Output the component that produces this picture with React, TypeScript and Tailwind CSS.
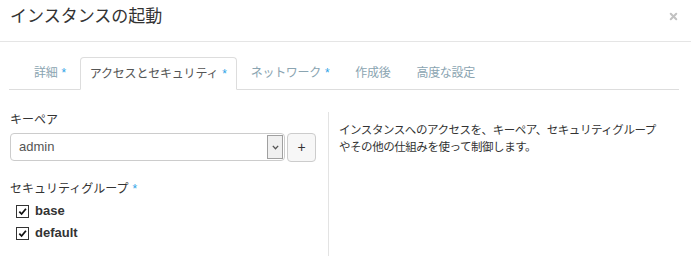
import { X } from 'lucide-react'

const jp = { fontFamily: '"Liberation Sans", "Noto Sans CJK JP", sans-serif' }

const tabs = [
  { label: '詳細', req: true },
  { label: 'アクセスとセキュリティ', req: true, active: true },
  { label: 'ネットワーク', req: true },
  { label: '作成後' },
  { label: '高度な設定' },
]

function Check({ label }: { label: string }) {
  return (
    <label className="flex items-center gap-[6px] h-[22px] pl-[6px]">
      <span className="flex h-[13px] w-[13px] items-center justify-center border border-[#333] bg-white">
        <svg viewBox="0 0 10 10" className="h-[9px] w-[9px]">
          <path d="M1.5 5.2 L4 7.8 L8.8 2" fill="none" stroke="#111" strokeWidth="2" />
        </svg>
      </span>
      <span className="text-[13px] font-bold text-[#333]">{label}</span>
    </label>
  )
}

export default function App() {
  return (
    <div className="h-[264px] w-[691px] bg-white text-[#333]" style={jp}>
      <div className="flex h-[42px] items-start justify-between border-b border-[#e5e5e5] pl-[10px] pr-[12px] pt-[8px]">
        <h1 className="text-[17px] leading-[18px] text-[#333]">インスタンスの起動</h1>
        <X className="mt-[3px] h-[11px] w-[11px] text-[#c2c2c2]" strokeWidth={4.5} />
      </div>

      <div className="ml-[9px] mt-[15px] flex h-[33px] w-[670px] gap-[2px] border-b border-[#ddd] pl-[13px]">
        {tabs.map((t) => (
          <div
            key={t.label}
            className={
              t.active
                ? '-mb-px flex items-center rounded-t-[4px] border border-[#ddd] border-b-white bg-white px-[9px] text-[12px] tracking-[-0.2px] text-[#555]'
                : 'flex items-center px-[12px] text-[12px] tracking-[-0.3px] text-[#8aa4b1]'
            }
          >
            {t.label}
            {t.req && <span className="ml-[4px] text-[#2fa4e7]">*</span>}
          </div>
        ))}
      </div>

      <div className="flex pt-[22px]">
        <div className="w-[329px] border-r border-[#e3e3e3] pl-[10px] pr-[12px] pb-[12px]">
          <div className="text-[12px] leading-[16px] text-[#333]">キーペア</div>
          <div className="mt-[5px] flex gap-[2px]">
            <div className="flex h-[28px] w-[276px] items-center rounded-[4px] border border-[#ccc] pl-[8px] pr-[1px]">
              <span className="flex-1 text-[13px] text-[#555]" style={{ fontFamily: '"Liberation Sans", sans-serif' }}>
                admin
              </span>
              <span className="flex h-[24px] w-[16px] items-center justify-center border border-[#a0a0a0] bg-[#f0f0f0]">
                <svg viewBox="0 0 8 6" className="h-[5px] w-[7px]">
                  <path d="M0.8 1 L4 4.5 L7.2 1" fill="none" stroke="#555" strokeWidth="1.6" />
                </svg>
              </span>
            </div>
            <div className="flex h-[29px] w-[29px] items-center justify-center rounded-[4px] border border-[#ccc] bg-[#f7f7f7] text-[14px] text-[#333]">
              +
            </div>
          </div>

          <div className="mt-[19px] text-[12px] leading-[16px] text-[#333]">
            セキュリティグループ<span className="ml-[4px] text-[#2fa4e7]">*</span>
          </div>
          <div className="mt-[3px]">
            <Check label="base" />
            <Check label="default" />
          </div>
        </div>

        <div className="pl-[10px] pt-[10px] text-[11.5px] leading-[17px] tracking-[-0.45px] text-[#333]">
          インスタンスへのアクセスを、キーペア、セキュリティグループ
          <br />
          やその他の仕組みを使って制御します。
        </div>
      </div>
    </div>
  )
}
